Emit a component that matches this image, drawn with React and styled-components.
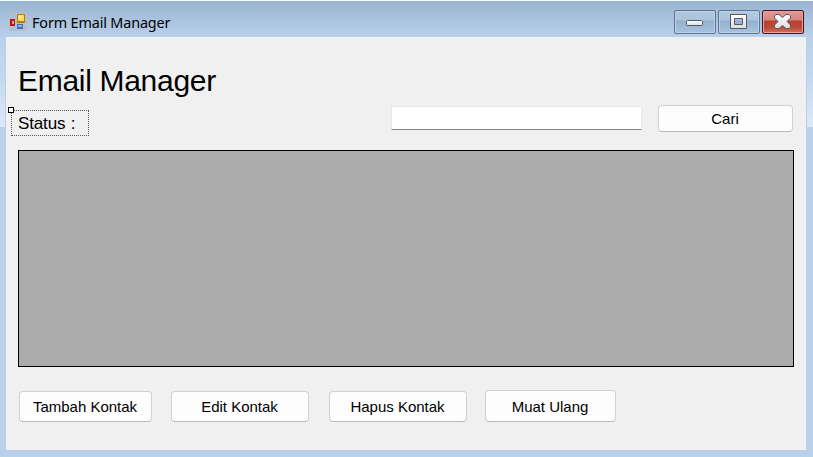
import React from 'react';
import styled, { createGlobalStyle } from 'styled-components';

const Global = createGlobalStyle`
  * { box-sizing: border-box; }
  body { margin: 0; background: #b9d0ea; overflow: hidden; }
  button, input { font: inherit; color: inherit; margin: 0; }
`;

const Window = styled.div`
  width: 813px;
  height: 457px;
  padding: 0 7px 7px 6px;
  border-top: 1px solid #f6f8fa;
  background:
    linear-gradient(#99b4d1, #b9d0ea 36px) top / 100% 36px no-repeat,
    linear-gradient(#b9d0ea, #b9d0ea) 5px 36px / 1px 90px no-repeat,
    linear-gradient(#b9d0ea, #b9d0ea) 806px 36px / 1px 90px no-repeat,
    linear-gradient(#b9d0ea, #c4d8ef 45%, #dde9f7) 0 36px / 100% 90px no-repeat,
    #b9d0ea;
  font-family: "Liberation Sans", Arial, sans-serif;
  color: #000;
`;

const TitleBar = styled.header`
  height: 36px;
  display: flex;
  align-items: flex-start;
  padding: 9px 2px 0 3px;
`;

const AppIcon = styled.svg`
  margin-top: 3px;
  width: 18px;
  height: 18px;
  flex: none;
`;

const Caption = styled.span`
  margin: 4px auto 0 5px;
  font: 14.4px/18px "Noto Sans", "Open Sans", sans-serif;
  letter-spacing: -0.15px;
  white-space: nowrap;
`;

const WindowControls = styled.div`
  display: flex;
  gap: 2px;
`;

const ControlButton = styled.button`
  width: 42px;
  height: 24px;
  padding: 0;
  display: block;
  border: 1px solid ${p => (p.$close ? '#48142a' : '#5d7593')};
  border-radius: 2px;
  box-shadow: inset 0 0 0 1px ${p => (p.$close ? '#e5a29a' : '#bdd0e5')};
  background: ${p => (p.$close
    ? 'linear-gradient(#e29a90 0, #d5877d 9px, #b8422d 10px, #bb4933 16px, #d2705c 100%)'
    : 'linear-gradient(#b4c9df 0, #abc3dc 9px, #94b0cd 10px, #a9c4e0 100%)')};
  svg { display: block; }
`;

const Client = styled.main`
  height: 413px;
  padding: 26px 12px 0;
  background: #f0f0f0;
`;

const Heading = styled.h1`
  margin: 0;
  font-size: 30px;
  line-height: 36px;
  font-weight: 400;
  letter-spacing: -0.3px;
  white-space: nowrap;
`;

const SearchRow = styled.div`
  display: flex;
  align-items: flex-start;
  margin-top: 6px;
  height: 45px;
`;

const StatusLabel = styled.div`
  position: relative;
  width: 78px;
  height: 26px;
  margin: 5px 302px 0 -7px;
  padding-left: 6px;
  border: 1px dotted #555;
  font-size: 17px;
  line-height: 25px;
  letter-spacing: -0.15px;
  word-spacing: 1px;
  white-space: pre;
`;

const Handle = styled.span`
  position: absolute;
  left: -4px;
  top: -4px;
  width: 6px;
  height: 6px;
  border: 1px solid #000;
  background: #fff;
`;

const SearchInput = styled.input`
  width: 251px;
  height: 24px;
  margin: 1px 16px 0 0;
  padding: 0 4px;
  border: 1px solid #e8e8e8;
  border-bottom-color: #868686;
  border-radius: 1px;
  background: #fff;
  outline: none;
`;

const Button = styled.button`
  width: ${p => p.$width}px;
  height: ${p => p.$height}px;
  padding: ${p => (p.$height === 32 ? '2px 1px 0 0' : '0 1px 0 0')};
  border: 1px solid #d0d0d0;
  border-bottom-color: #bababa;
  border-radius: 4px;
  background: #fdfdfd;
  font-size: 15px;
  line-height: 18px;
  white-space: nowrap;
`;

const DataGrid = styled.section`
  width: 776px;
  height: 217px;
  border: 1px solid #000;
  background: #ababab;
`;

const Actions = styled.footer`
  display: flex;
  align-items: flex-end;
  margin: 23px 0 0 1px;
  button:nth-child(1) { margin-right: 19px; }
  button:nth-child(2) { margin-right: 20px; }
  button:nth-child(3) { margin-right: 18px; }
`;

const actions = [
  ['Tambah Kontak', 133, 31],
  ['Edit Kontak', 138, 31],
  ['Hapus Kontak', 138, 31],
  ['Muat Ulang', 131, 32],
];

const CROSS = 'M13 3.5H16L19.5 6.5L23 3.5H26L27.5 5V7L24 10.5L27.5 14V16L26 17.5H23L19.5 14.5L16 17.5H13L11.5 16V14L15 10.5L11.5 7V5Z';

function Gradients() {
  return (
    <defs>
      <linearGradient id="glyph" x2="0" y2="1">
        <stop stopColor="#fff" />
        <stop offset="1" stopColor="#dedede" />
      </linearGradient>
    </defs>
  );
}

export default function App() {
  return (
    <>
      <Global />
      <Window>
        <TitleBar>
          <AppIcon viewBox="0 0 18 18" shapeRendering="crispEdges">
            <path d="M0 0H18V18H0Z" fill="#b7bfca" />
            <path d="M1 1H6V5H1ZM1 14H6V17H1Z" fill="#a9bfd8" />
            <path d="M1 6H6V13H1Z" fill="#b31d18" />
            <path d="M3 8H5V11H3Z" fill="#ef9b8c" />
            <path d="M8 1H16V10H8Z" fill="#b97b00" />
            <path d="M9 2H15V8H9Z" fill="#ffdc59" />
            <path d="M10 3H13V5H10Z" fill="#fff0a0" />
            <path d="M8 11H14V16H8Z" fill="#386fc9" />
            <path d="M9 12H13V14H9Z" fill="#88b5f4" />
          </AppIcon>
          <Caption>Form Email Manager</Caption>
          <WindowControls>
            <ControlButton aria-label="Minimize">
              <svg width="40" height="22">
                <Gradients />
                <rect x="11.5" y="9.5" width="16" height="5" rx="1" fill="url(#glyph)" stroke="#545866" />
              </svg>
            </ControlButton>
            <ControlButton aria-label="Maximize">
              <svg width="40" height="22">
                <path d="M11.5 3.5H27.5V17.5H11.5ZM15.5 7.5V13.5H23.5V7.5Z" fillRule="evenodd" strokeLinejoin="round" fill="url(#glyph)" stroke="#545866" />
              </svg>
            </ControlButton>
            <ControlButton $close aria-label="Close">
              <svg width="40" height="22">
                <path d={CROSS} fill="url(#glyph)" stroke="#545866" strokeLinejoin="round" />
              </svg>
            </ControlButton>
          </WindowControls>
        </TitleBar>
        <Client>
          <Heading>Email Manager</Heading>
          <SearchRow>
            <StatusLabel>Status :<Handle /></StatusLabel>
            <SearchInput aria-label="Cari" />
            <Button $width={135} $height={27}>Cari</Button>
          </SearchRow>
          <DataGrid />
          <Actions>
            {actions.map(([label, width, height]) => (
              <Button key={label} $width={width} $height={height}>{label}</Button>
            ))}
          </Actions>
        </Client>
      </Window>
    </>
  );
}
